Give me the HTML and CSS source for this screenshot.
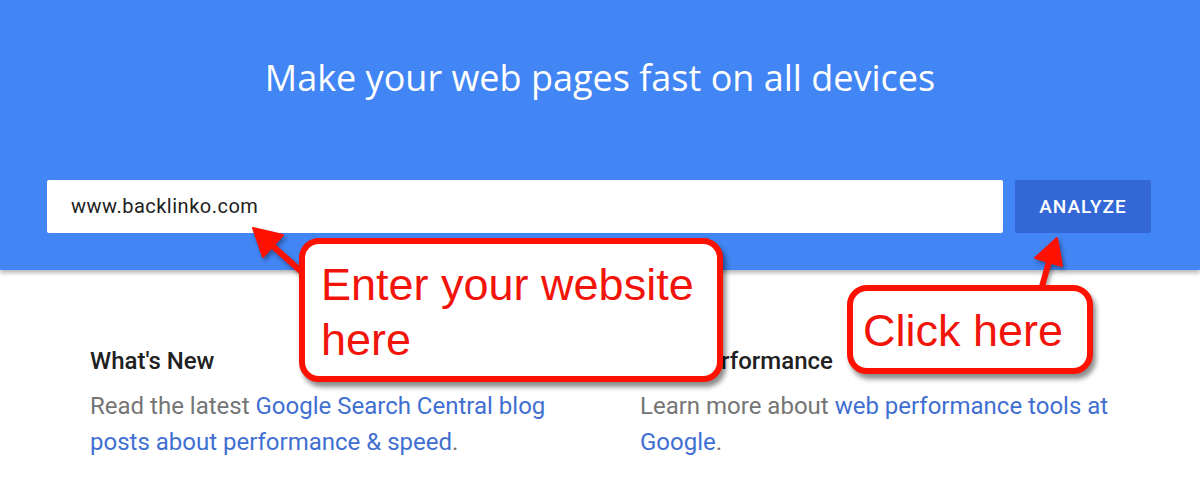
FILE: index.html
```html
<!DOCTYPE html>
<html lang="en">
<head>
<meta charset="utf-8">
<title>PageSpeed Insights</title>
<link rel="stylesheet" href="styles.css">
</head>
<body>
<div class="page">
  <header class="hero">
    <h1 class="hero-title">Make your web pages fast on all devices</h1>
    <form class="search">
      <div class="url-box">www.backlinko.com</div>
      <button type="button" class="analyze">ANALYZE</button>
    </form>
  </header>
  <main class="info">
    <section class="col">
      <h2 class="col-title">What's New</h2>
      <p class="col-text">Read the latest <a href="#">Google Search Central blog posts about performance &amp; speed</a>.</p>
    </section>
    <section class="col">
      <h2 class="col-title">Web Performance</h2>
      <p class="col-text">Learn more about <a href="#">web performance tools at Google</a>.</p>
    </section>
  </main>

  <svg class="arrows" width="1200" height="489" viewBox="0 0 1200 489">
    <g fill="#fe1100" stroke="#fe1100" stroke-linejoin="round">
      <line x1="304" y1="274" x2="266" y2="240" stroke-width="6"/>
      <polygon points="253,228 283,235 263,257" stroke-width="2"/>
      <line x1="1041" y1="290" x2="1050" y2="258" stroke-width="6"/>
      <polygon points="1057,238 1035,258 1062,266" stroke-width="2"/>
    </g>
  </svg>
  <div class="callout callout-enter">Enter your website<br>here</div>
  <div class="callout callout-click">Click here</div>
</div>
</body>
</html>
```

FILE: styles.css
```css
* { box-sizing: border-box; }
html, body { margin: 0; padding: 0; background: #ffffff; }
body { font-family: Roboto, "Noto Sans", Arial, sans-serif; }
.page { position: relative; width: 1200px; height: 489px; overflow: hidden; }

.hero {
  background: #4285f4;
  height: 270px;
  padding-top: 56px;
  box-shadow: 0 3px 4px rgba(0, 0, 0, 0.28);
  position: relative;
  z-index: 1;
}
.hero-title {
  margin: 0;
  text-align: center;
  color: #ffffff;
  font-family: "Open Sans", Roboto, sans-serif;
  font-weight: 400;
  font-size: 36px;
  line-height: 44px;
}
.search {
  display: flex;
  gap: 12px;
  margin: 80px 0 0 47px;
}
.url-box {
  width: 956px;
  height: 53px;
  background: #ffffff;
  border-radius: 2px;
  padding-left: 24px;
  font-size: 20px;
  letter-spacing: 0.5px;
  line-height: 53px;
  color: #212121;
}
.analyze {
  width: 136px;
  height: 53px;
  border: 0;
  border-radius: 2px;
  background: #3367d6;
  color: #ffffff;
  font-family: Roboto, sans-serif;
  font-weight: 500;
  font-size: 19px;
  letter-spacing: 1px;
  padding: 0;
}

.info {
  display: grid;
  grid-template-columns: 550px 550px;
  padding: 77px 0 0 90px;
}
.col-title {
  margin: 0 0 13px;
  font-size: 24px;
  font-weight: 500;
  line-height: 28px;
  color: #212121;
}
.col-text {
  margin: 0;
  width: 490px;
  font-size: 24px;
  line-height: 36px;
  color: #757575;
}
.col-text a { color: #3f6fd1; text-decoration: none; }

.arrows {
  position: absolute;
  left: 0; top: 0;
  z-index: 2;
  filter: drop-shadow(2px 3px 2px rgba(0,0,0,0.35));
}
.callout {
  position: absolute;
  z-index: 3;
  background: #ffffff;
  border: 6px solid #fe1100;
  border-radius: 20px;
  color: #f2140a;
  font-family: "Liberation Sans", Arial, sans-serif;
  font-size: 45px;
  line-height: 55px;
  box-shadow: 3px 5px 5px rgba(0, 0, 0, 0.45);
}
.callout-enter {
  left: 299px; top: 238px;
  width: 424px; height: 144px;
  padding: 13px 0 0 16px;
}
.callout-click {
  left: 847px; top: 285px;
  width: 246px; height: 89px;
  padding: 12px 0 0 10px;
}
```
